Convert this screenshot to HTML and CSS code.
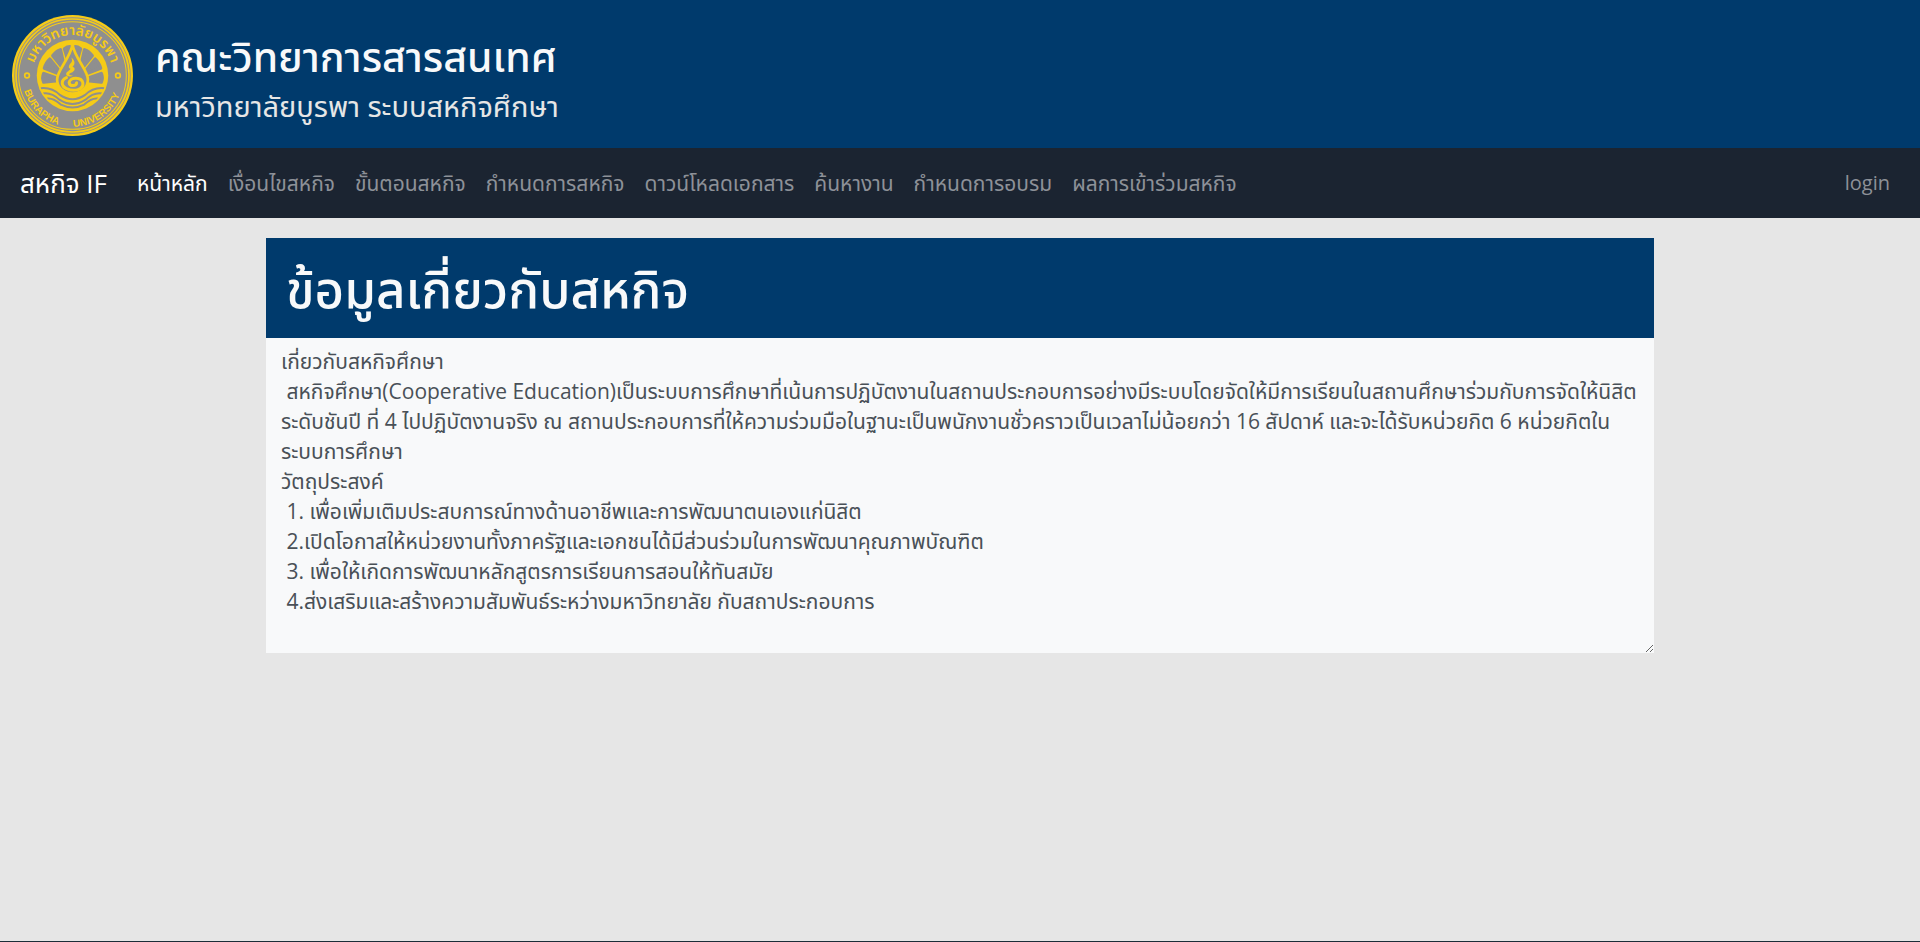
FILE: index.html
```html
<!DOCTYPE html>
<html lang="th">
<head>
<meta charset="utf-8">
<title>สหกิจ IF</title>
<link rel="stylesheet" href="styles.css">
</head>
<body>
<header class="banner">
  <svg class="seal" viewBox="-181 -181 362 362" role="img" aria-label="Burapha University">
    <defs>
      <path id="arc-top" d="M-121 0 A121 121 0 0 1 121 0"/>
      <path id="arc-bottom" d="M-150 20 A151 151 0 0 0 150 20"/>
      <clipPath id="disc"><circle r="102"/></clipPath>
    </defs>
    <circle r="181" fill="#f5cb17"/>
    <circle r="174" fill="#8f8f8f"/>
    <circle r="169" fill="none" stroke="#f5cb17" stroke-width="5"/>
    <circle r="161" fill="none" stroke="#f5cb17" stroke-width="3"/>
    <g fill="none" stroke="#f5cb17" stroke-width="5">
      <circle cx="-136" r="7"/><circle cx="136" r="7"/>
    </g>
    <text class="seal-th"><textPath href="#arc-top" startOffset="50%">มหาวิทยาลัยบูรพา</textPath></text>
    <text class="seal-en"><textPath href="#arc-bottom" startOffset="23%">BURAPHA</textPath></text>
    <text class="seal-en"><textPath href="#arc-bottom" startOffset="71%">UNIVERSITY</textPath></text>
    <circle r="107" fill="#f5cb17"/>
    <g fill="#8f8f8f" stroke="#8f8f8f" stroke-width="10" stroke-linejoin="round">
      <path d="M-30 14L-86 20Q-92 8 -86 -6Z"/>
      <path d="M-28 0L-84 -22Q-80 -38 -68 -49Z"/>
      <path d="M-22 -14L-59 -59Q-50 -72 -36 -77Z"/>
      <path d="M-12 -40L-24 -80Q-16 -86 -8 -86Z"/>
      <path d="M30 14L86 20Q92 8 86 -6Z"/>
      <path d="M28 0L84 -22Q80 -38 68 -49Z"/>
      <path d="M22 -14L59 -59Q50 -72 36 -77Z"/>
      <path d="M12 -40L24 -80Q16 -86 8 -86Z"/>
    </g>
    <g clip-path="url(#disc)" fill="none" stroke="#8f8f8f" stroke-width="6">
      <path d="M-96 38Q-62 34 -38 58Q0 84 38 58Q62 34 96 38"/>
      <path d="M-90 54Q-65 48 -38 73Q0 97 38 73Q65 48 90 54"/>
      <path d="M-76 69Q-58 66 -35 87Q0 104 35 87Q58 66 76 69"/>
    </g>
    <path d="M0 -92C-8 -50 -46 -16 -46 12C-46 38 -24 54 0 54C24 54 46 38 46 12C46 -16 8 -50 0 -92Z" fill="#8f8f8f" stroke="#f5cb17" stroke-width="8"/>
    <path d="M-4 -54C8 -46 9 -34 0 -26C10 -24 8 -12 -4 -8C-14 -4 -10 0 2 1C-8 5 -20 3 -19 -5C-18 -12 -8 -14 -6 -20C-16 -22 -8 -36 -4 -38C0 -43 -1 -49 -4 -54Z" fill="#f5cb17"/>
    <path d="M-18 6C-36 14 -34 32 -18 39C6 50 34 42 31 22C28 4 -8 3 -10 21C-9 34 14 32 12 22" fill="none" stroke="#f5cb17" stroke-width="9" stroke-linecap="round"/>
  </svg>
  <div class="titles">
    <h1 class="faculty">คณะวิทยาการสารสนเทศ</h1>
    <p class="university">มหาวิทยาลัยบูรพา ระบบสหกิจศึกษา</p>
  </div>
</header>
<nav class="navbar">
  <a class="brand" href="#">สหกิจ IF</a>
  <a class="link active" href="#">หน้าหลัก</a>
  <a class="link" href="#">เงื่อนไขสหกิจ</a>
  <a class="link" href="#">ขั้นตอนสหกิจ</a>
  <a class="link" href="#">กำหนดการสหกิจ</a>
  <a class="link" href="#">ดาวน์โหลดเอกสาร</a>
  <a class="link" href="#">ค้นหางาน</a>
  <a class="link" href="#">กำหนดการอบรม</a>
  <a class="link" href="#">ผลการเข้าร่วมสหกิจ</a>
  <a class="link login" href="#">login</a>
</nav>
<main class="content">
  <h2 class="card-title"><label for="about">ข้อมูลเกี่ยวกับสหกิจ</label></h2>
  <textarea class="about" id="about" rows="10" spellcheck="false">เกี่ยวกับสหกิจศึกษา
 สหกิจศึกษา(Cooperative Education)เป็นระบบการศึกษาที่เน้นการปฏิบัตงานในสถานประกอบการอย่างมีระบบโดยจัดให้มีการเรียนในสถานศึกษาร่วมกับการจัดให้นิสิตระดับชันปี ที่ 4 ไปปฏิบัตงานจริง ณ สถานประกอบการที่ให้ความร่วมมือในฐานะเป็นพนักงานชั่วคราวเป็นเวลาไม่น้อยกว่า 16 สัปดาห์ และจะได้รับหน่วยกิต 6 หน่วยกิตในระบบการศึกษา
วัตถุประสงค์
 1. เพื่อเพิ่มเติมประสบการณ์ทางด้านอาชีพและการพัฒนาตนเองแก่นิสิต
 2.เปิดโอกาสให้หน่วยงานทั้งภาครัฐและเอกชนได้มีส่วนร่วมในการพัฒนาคุณภาพบัณฑิต
 3. เพื่อให้เกิดการพัฒนาหลักสูตรการเรียนการสอนให้ทันสมัย
 4.ส่งเสริมและสร้างความสัมพันธ์ระหว่างมหาวิทยาลัย กับสถาประกอบการ</textarea>
</main>
</body>
</html>
```
FILE: styles.css
```css
* { box-sizing: border-box; }
body {
  margin: 0;
  min-height: 100vh;
  background: #e6e6e6;
  border-bottom: 1px solid #1c2d38;
  font-family: "Open Sans", "Noto Sans Thai", "Noto Sans", sans-serif;
  font-size: 21px;
  line-height: 30px;
}
.banner {
  display: flex;
  align-items: center;
  gap: 22px;
  padding: 15px 12px 12px;
  background: #003a6c;
  color: #f8f9fa;
}
.seal { width: 121px; height: 121px; flex: none; }
.seal text { fill: #f5cb17; text-anchor: middle; }
.seal-th { font-size: 42px; font-weight: 600; }
.seal-en { font-family: "Liberation Sans Narrow", "Liberation Sans", sans-serif; font-size: 30px; font-weight: 700; }
.titles { padding-top: 8px; }
.faculty { margin: 0; font-size: 41px; line-height: 48px; font-weight: 500; }
.university { margin: 4px 0 0; font-size: 29px; line-height: 44px; color: #e6e6e6; }
.navbar {
  display: flex;
  align-items: center;
  padding: 12px 20px;
  min-height: 70px;
  background: #1b2431;
}
.brand { margin-right: 20px; color: #fff; font-size: 26px; line-height: 38px; text-decoration: none; }
.link { padding: 8px 10px; color: #8d9198; text-decoration: none; }
.active { color: #fff; }
.login { margin-left: auto; font-size: 20px; }
.content { display: flex; flex-direction: column; margin: 20px auto; width: calc(100% - 532px); }
.card-title {
  margin: 0;
  padding: 20px;
  background: #003a6c;
  color: #f8f9fa;
  font-size: 51px;
  line-height: 60px;
  font-weight: 500;
}
.about {
  padding: 8px 15px 7px;
  width: 100%;
  border: 0;
  background: #f8f9fa;
  color: #495057;
  font: inherit;
  resize: vertical;
}
```
